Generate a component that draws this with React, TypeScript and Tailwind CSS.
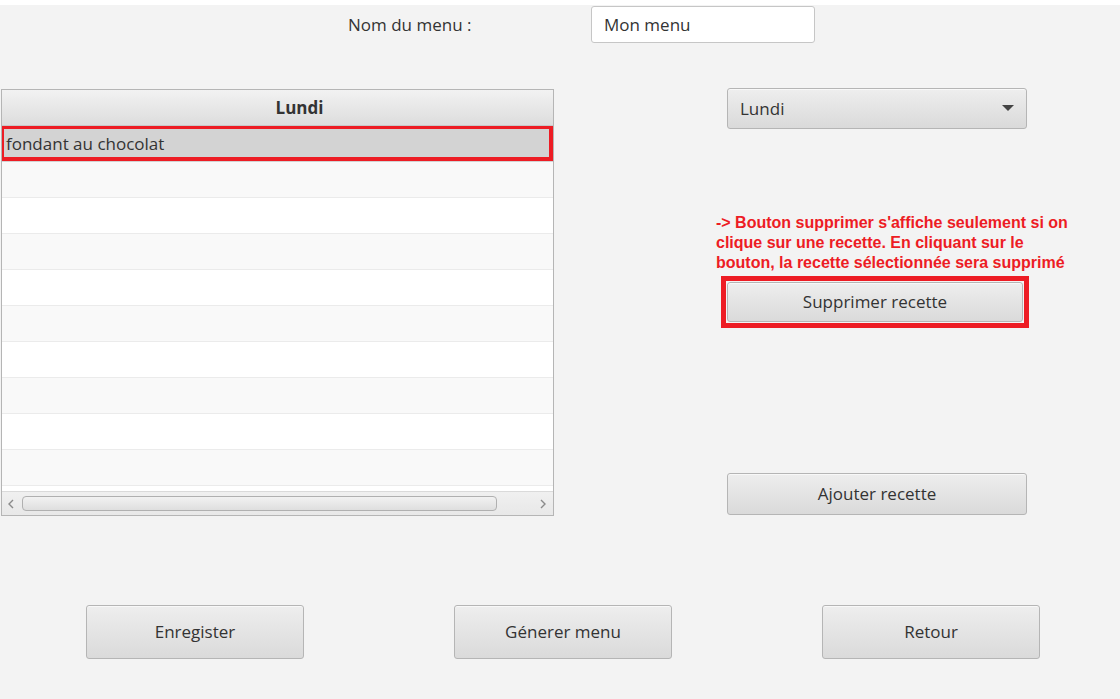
import React from "react";

const font = { fontFamily: '"Open Sans", "Noto Sans", sans-serif' };

function Btn({ label, className = "" }: { label: string; className?: string }) {
  return (
    <div
      className={`flex items-center justify-center rounded-[3px] border border-[#b5b5b5] bg-gradient-to-b from-[#eeeeee] to-[#dadada] text-[17px] text-[#333] shadow-[inset_0_1px_0_#f8f8f8] ${className}`}
    >
      {label}
    </div>
  );
}

export default function App() {
  const rows = Array.from({ length: 11 });
  return (
    <div className="w-[1120px] h-[699px] bg-[#f3f3f3] overflow-hidden flex flex-col" style={font}>
      <div className="h-[5px] bg-white shrink-0" />
      {/* top row */}
      <div className="flex items-center mt-px h-[37px] shrink-0">
        <div className="ml-[348px] w-[243px] pt-px text-[17px] text-[#333]">Nom du menu :</div>
        <div className="w-[224px] h-[37px] bg-white rounded-[3px] border border-[#c6c6c6] flex items-center pl-3 text-[17px] text-[#333]">
          Mon menu
        </div>
      </div>

      {/* main */}
      <div className="flex mt-[45px] shrink-0">
        {/* table */}
        <div className="ml-px mt-px w-[553px] h-[427px] border border-[#b5b5b5] bg-white flex flex-col">
          <div className="h-[36px] shrink-0 border-b border-[#c8c8c8] bg-gradient-to-b from-[#f2f2f2] to-[#dddddd] flex items-center justify-center pl-[44px] font-bold text-[17px] text-[#333]">
            Lundi
          </div>
          <div className="flex-1 overflow-hidden flex flex-col">
            <div className="relative h-[36px] shrink-0 bg-[#d3d3d3] flex items-center pl-[4px] text-[17px] text-[#333]">
              fondant au chocolat
              <div className="absolute -left-[2px] -top-[1px] w-[553px] h-[36px] border-4 border-[#ed1c24]" />
            </div>
            {rows.map((_, i) => (
              <div
                key={i}
                className={`h-[36px] shrink-0 border-b border-[#ebebeb] ${i % 2 === 0 ? "bg-[#f9f9f9]" : "bg-white"}`}
              />
            ))}
          </div>
          <div className="h-[24px] shrink-0 border-t border-[#dadada] bg-gradient-to-b from-[#f0f0f0] to-[#e8e8e8] flex items-center">
            <svg width="18" height="14" viewBox="0 0 18 14" className="ml-[1px]">
              <path d="M10 3 L6 7 L10 11" fill="none" stroke="#8a8a8a" strokeWidth="1.4" />
            </svg>
            <div className="ml-[1px] w-[475px] h-[15px] rounded-[4px] border border-[#b0b0b0] bg-gradient-to-b from-[#f2f2f2] to-[#dedede]" />
            <div className="flex-1" />
            <svg width="18" height="14" viewBox="0 0 18 14" className="mr-[1px]">
              <path d="M7 3 L11 7 L7 11" fill="none" stroke="#8a8a8a" strokeWidth="1.4" />
            </svg>
          </div>
        </div>

        {/* right column */}
        <div className="ml-[162px] w-[360px] flex flex-col">
          <div className="ml-[11px] w-[300px] h-[41px] rounded-[3px] border border-[#b5b5b5] bg-gradient-to-b from-[#eeeeee] to-[#dadada] shadow-[inset_0_1px_0_#f8f8f8] flex items-center pl-3 pr-3 text-[17px] text-[#333]">
            <span className="flex-1">Lundi</span>
            <svg width="12" height="7" viewBox="0 0 12 7">
              <path d="M0 0 H12 L6 6 Z" fill="#444" />
            </svg>
          </div>
          <div
            className="mt-[84px] text-[16px] leading-[20px] font-bold text-[#ed1c24]"
            style={{ fontFamily: '"Liberation Sans", Arial, sans-serif' }}
          >
            -&gt; Bouton supprimer s'affiche seulement si on
            <br />
            clique sur une recette. En cliquant sur le
            <br />
            bouton, la recette sélectionnée sera supprimé
          </div>
          <div className="mt-[3px] ml-[5px] w-[308px] h-[52px] border-[5px] border-[#ed1c24] p-px flex">
            <Btn label="Supprimer recette" className="flex-1" />
          </div>
          <Btn label="Ajouter recette" className="mt-[145px] ml-[11px] w-[300px] h-[42px]" />
        </div>
      </div>

      {/* bottom buttons */}
      <div className="flex mt-[89px] shrink-0">
        <Btn label="Enregister" className="ml-[86px] w-[218px] h-[54px]" />
        <Btn label="Génerer menu" className="ml-[150px] w-[218px] h-[54px]" />
        <Btn label="Retour" className="ml-[150px] w-[218px] h-[54px]" />
      </div>
    </div>
  );
}
